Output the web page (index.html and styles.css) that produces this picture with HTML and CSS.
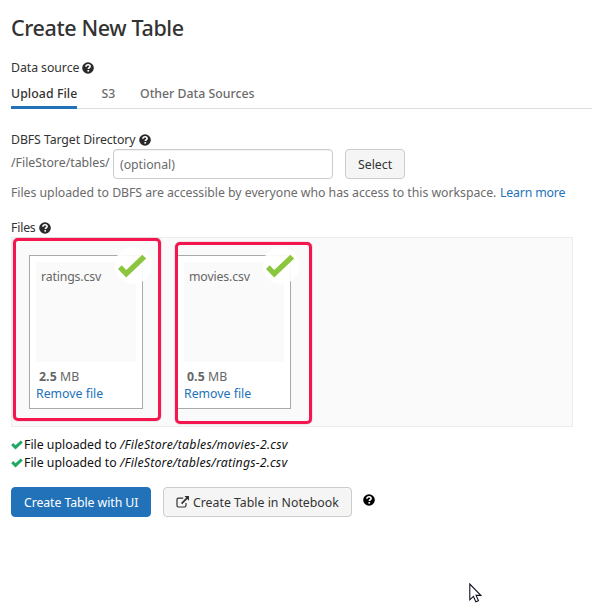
FILE: index.html
```html
<!DOCTYPE html>
<html lang="en">
<head>
<meta charset="utf-8">
<title>Create New Table</title>
<link rel="stylesheet" href="styles.css">
</head>
<body>
<svg class="sprite" aria-hidden="true">
  <symbol id="help" viewBox="0 0 12 12">
    <circle cx="6" cy="6" r="5.8" fill="currentColor"/>
    <path d="M3.9 4.7C4 3.2 4.9 2.7 6.1 2.7c1.2 0 2 .6 2 1.7 0 1.4-1.8 1.3-1.8 2.7" fill="none" stroke="#fff" stroke-width="1.6"/>
    <path d="M5.4 8h1.7v1.6H5.4z" fill="#fff"/>
  </symbol>
  <symbol id="tick" viewBox="0 0 12 10">
    <path d="M.2 5.2 2.2 3.1 4.5 5.3 9.7.5 11.8 2.5 4.5 9.4z" fill="currentColor"/>
  </symbol>
  <symbol id="badge" viewBox="0 0 38 38">
    <circle cx="19" cy="19" r="18.5" fill="#fff" fill-opacity=".92"/>
    <path d="M4 22.5 7.7 18.8 12.2 23.4 28.3 8.3 32.2 12 12.2 31z" fill="#8cc63f"/>
  </symbol>
</svg>
<main class="page">
  <h1 class="title">Create New Table</h1>
  <div class="label label-source"><span class="t-source">Data source</span><svg class="help"><use href="#help"/></svg></div>
  <nav class="tabs">
    <a class="tab active">Upload File</a>
    <a class="tab tab-s3">S3</a>
    <a class="tab tab-other">Other Data Sources</a>
  </nav>
  <div class="label label-dir"><span class="t-dir">DBFS Target Directory</span><svg class="help"><use href="#help"/></svg></div>
  <div class="dir-row">
    <span class="prefix">/FileStore/tables/</span>
    <div class="input">(optional)</div>
    <button class="btn btn-select">Select</button>
  </div>
  <p class="hint"><span class="t-hint">Files uploaded to DBFS are accessible by everyone who has access to this workspace.</span><a class="link t-learn">Learn more</a></p>
  <div class="label label-files"><span class="t-files">Files</span><svg class="help"><use href="#help"/></svg></div>
  <section class="dropzone">
    <div class="mark mark-one">
      <article class="file">
        <svg class="badge"><use href="#badge"/></svg>
        <div class="preview"><span class="t-name">ratings.csv</span></div>
        <div class="size"><strong>2.5</strong> MB</div>
        <a class="link remove">Remove file</a>
      </article>
    </div>
    <div class="mark mark-two">
      <article class="file file-cut">
        <svg class="badge"><use href="#badge"/></svg>
        <div class="preview"><span class="t-name">movies.csv</span></div>
        <div class="size"><strong>0.5</strong> MB</div>
        <a class="link remove">Remove file</a>
      </article>
    </div>
  </section>
  <ul class="log">
    <li><svg class="tick"><use href="#tick"/></svg><span class="t-log">File uploaded to</span><em class="t-path">/FileStore/tables/movies-2.csv</em></li>
    <li><svg class="tick"><use href="#tick"/></svg><span class="t-log">File uploaded to</span><em class="t-path t-path-ratings">/FileStore/tables/ratings-2.csv</em></li>
  </ul>
  <div class="actions">
    <button class="btn btn-primary">Create Table with UI</button>
    <button class="btn btn-notebook"><svg class="external" viewBox="0 0 14 12"><path d="M7.2 2.2H2.4Q1 2.2 1 3.6v6Q1 11 2.4 11h6.2Q10 11 10 9.6V7" fill="none" stroke="currentColor" stroke-width="1.2"/><path d="M8.5 0H13v4.7L11.4 3.1 6.2 8.2 5 7l5.1-5.3z" fill="currentColor"/></svg><span class="t-notebook">Create Table in Notebook</span></button>
    <svg class="help help-end"><use href="#help"/></svg>
  </div>
</main>
<svg class="cursor" viewBox="0 0 13 20"><path d="M.8 1v15.8l3.6-3.4 2.4 5.4 2.7-1.1-2.4-5.3h4.7z" fill="#fff" stroke="#111122" stroke-width="1.1"/></svg>
</body>
</html>
```
FILE: styles.css
```css
* { box-sizing: border-box; }
body { margin: 0; background: #fff; color: #333; font: 12.3px/18px "Noto Sans", "Open Sans", sans-serif; white-space: nowrap; }
.sprite { position: absolute; width: 0; height: 0; }
.page { width: 592px; height: 615px; padding: 11px 0 0 11px; overflow: hidden; }
.title { margin: 0; height: 33px; font-size: 21.5px; line-height: 34px; font-weight: 500; letter-spacing: -.38px; }
.label { display: flex; align-items: center; gap: 3px; height: 18px; }
.label-source { margin-top: 15px; letter-spacing: -.06px; }
.help { width: 12px; height: 12px; margin-top: -1px; color: #292929; flex: none; }
.tabs { display: flex; height: 27px; margin-top: 5px; border-bottom: 1px solid #ddd; }
.tab { height: 27px; padding-top: 3px; color: #6b6b6b; font-weight: 500; }
.tab.active { width: 66px; color: #333; border-bottom: 3px solid #2272b9; letter-spacing: .07px; }
.tab-s3 { margin-left: 24.5px; width: 15px; }
.tab-other { margin-left: 23.5px; }
.label-dir { margin-top: 22px; letter-spacing: -.08px; }
.dir-row { display: flex; height: 30px; }
.prefix { width: 102px; padding-top: 5px; color: #666; line-height: 17px; }
.input { width: 220px; height: 30px; padding: 6px 6px 4px 6px; border: 1px solid #ccc; border-radius: 4px; color: #6b6b6b; letter-spacing: -.03px; box-shadow: inset 0 1px 1px rgba(0,0,0,.06); }
.btn { display: flex; align-items: center; height: 30px; padding: 1px 0 0 12px; border: 1px solid #ccc; border-radius: 4px; background: #f5f5f5; color: #333; font: inherit; text-align: left; }
.btn-select { width: 60px; margin-left: 12px; }
.hint { display: flex; gap: 4px; margin: 5px 0 0; color: #6b6b6b; }
.t-hint { width: 485px; letter-spacing: -.035px; }
.t-learn { letter-spacing: -.17px; }
.link { color: #2272b9; }
.label-files { margin-top: 17px; letter-spacing: -.2px; }
.dropzone { display: flex; align-items: flex-start; width: 562px; height: 190px; border: 1px solid #ececec; background: #fafafa; }
.mark { border: 3px solid #f6164f; border-radius: 5px; box-shadow: 0 0 1px #7a3048; }
.mark-one { width: 148px; height: 183px; margin-left: 1px; padding: 14px 0 0 13px; }
.mark-two { width: 137px; height: 182px; margin: 4px 0 0 14px; padding: 10px 0 0; }
.file { position: relative; width: 114px; height: 154px; padding: 6px; border: 1px solid #aaa; background: #fff; color: #666; }
.file-cut { width: 113px; border-left: 0; }
.preview { width: 100px; height: 100px; padding: 6px 5px; background: #fafafa; }
.t-name { letter-spacing: -.15px; }
.size { height: 17px; margin-top: 6px; padding-left: 3px; line-height: 17px; letter-spacing: .08px; }
.remove { display: block; line-height: 18px; }
.badge { position: absolute; top: -10px; right: -10px; width: 38px; height: 39px; }
.log { margin: 9px 0 0; padding: 0; list-style: none; color: #111; }
.log li { display: flex; align-items: center; height: 18px; }
.tick { width: 12px; height: 10px; margin-right: 1px; color: #20a866; }
.t-log { width: 96px; }
.t-path { letter-spacing: .24px; }
.t-path-ratings { letter-spacing: .2px; }
.actions { display: flex; margin-top: 15px; }
.btn-primary { width: 140px; background: #2272b9; border-color: #2272b9; color: #fff; letter-spacing: -.08px; }
.btn-notebook { width: 189px; margin-left: 12px; }
.external { width: 14px; height: 12px; margin: -1px 3px 0 0; }
.help-end { margin: 7px 0 0 11px; color: #000; }
.cursor { position: absolute; left: 469px; top: 583px; width: 13px; height: 20px; }
```
